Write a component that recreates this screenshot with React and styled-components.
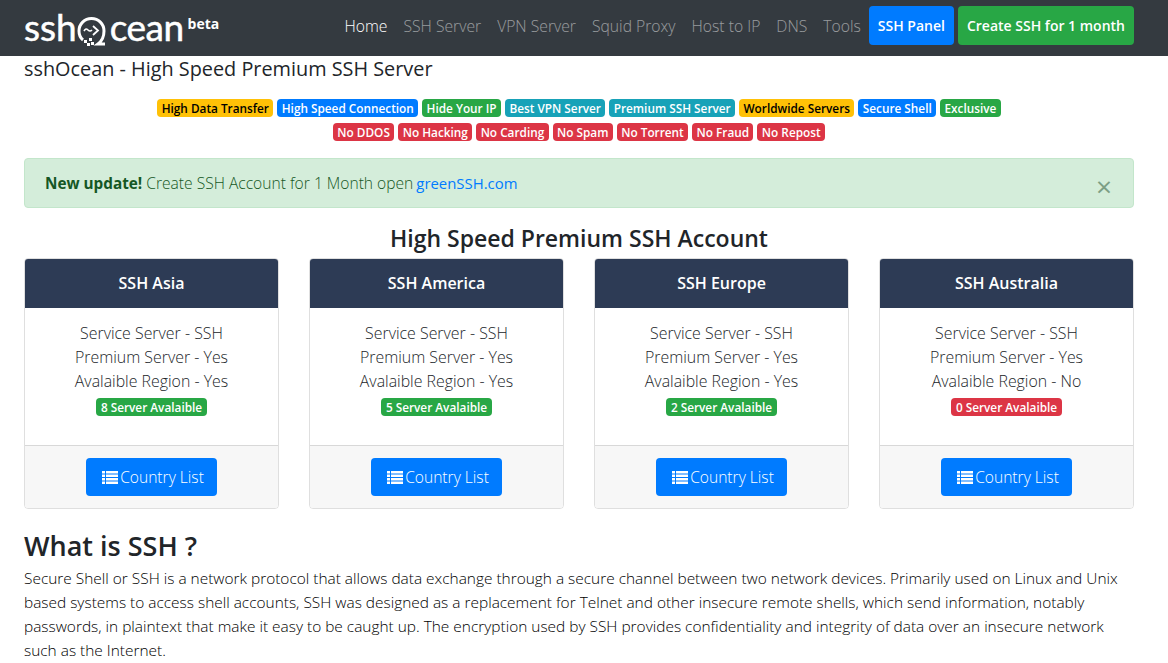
import React from 'react'
import styled, { createGlobalStyle } from 'styled-components'

const GlobalStyle = createGlobalStyle`
html, body {
  margin: 0;
  padding: 0;
  background: #fff;
  overflow: hidden;
}
body {
  font-family: "Open Sans", "Noto Sans", "Liberation Sans", sans-serif;
  font-size: 16px;
  font-weight: 300;
  line-height: 24px;
  color: #000;
}
* { box-sizing: border-box; }
`

const colors = {
  warning: '#ffc107',
  primary: '#007bff',
  success: '#28a745',
  info: '#17a2b8',
  danger: '#dc3545',
}

const Navbar = styled.nav`
  height: 56px;
  background: #343a40;
  display: flex;
  align-items: center;
  justify-content: space-between;
  padding: 0 34px 0 24px;
`
const Brand = styled.div`
  display: flex;
  align-items: flex-start;
  color: #fff;
  margin-top: -2px;
`
const LogoText = styled.span`
  font-family: "Lato", sans-serif;
  font-size: 37px;
  line-height: 44px;
  font-weight: 400;
  -webkit-text-stroke: 0.5px #fff;
  letter-spacing: ${props => props.$spacing || 0}px;
`
const LogoMark = styled.svg`
  width: 33px;
  height: 32px;
  margin-top: 11px;
  flex: none;
`
const Beta = styled.sup`
  font-size: 14px;
  line-height: 16px;
  font-weight: 700;
  margin: 11px 0 0 4px;
`
const NavLinks = styled.div`
  display: flex;
  align-items: center;
`
const NavLink = styled.a`
  padding: 0 8px;
  font-size: 15.7px;
  margin-top: -4px;
  color: ${props => (props.$active ? '#fff' : 'rgba(255,255,255,.5)')};
`
const NavButton = styled.a`
  height: 39px;
  margin-left: ${props => props.$gap || 0}px;
  margin-top: -5px;
  padding: 0 9px;
  display: flex;
  align-items: center;
  border-radius: 4px;
  font-size: 14px;
  font-weight: 600;
  color: #fff;
  background: ${props => colors[props.$color]};
`
const Content = styled.main`
  padding: 0 34px 0 24px;
`
const Heading = styled.h1`
  margin: -1px 0 0;
  font-size: 19.85px;
  line-height: 28px;
  font-weight: 400;
  color: #212529;
`
const BadgeRow = styled.div`
  display: flex;
  justify-content: center;
  gap: 4px;
  margin-top: ${props => props.$top}px;
`
const Badge = styled.span`
  display: inline-block;
  padding: 0 4.4px;
  height: 18px;
  margin-top: ${props => props.$top || 0}px;
  border-radius: 4px;
  font-size: 11.8px;
  line-height: 18px;
  font-weight: 600;
  white-space: nowrap;
  color: ${props => (props.$color === 'warning' ? '#000' : '#fff')};
  background: ${props => colors[props.$color]};
`
const Alert = styled.div`
  position: relative;
  height: 50px;
  margin-top: 17px;
  padding: 0 20px;
  display: flex;
  align-items: center;
  background: #d4edda;
  border: 1px solid #c3e6cb;
  border-radius: 4px;
  color: #155724;
  font-size: 15.6px;
`
const AlertLink = styled.a`
  color: #007bff;
  margin-left: 3px;
  font-size: 14.9px;
  font-weight: 400;
`
const Strong = styled.strong`
  margin-right: 4px;
  font-size: 15.3px;
  font-weight: 700;
`
const CloseButton = styled.span`
  position: absolute;
  right: 21px;
  top: 11px;
  font-size: 28px;
  line-height: 32px;
  font-weight: 400;
  color: #7c9f85;
`
const SectionTitle = styled.h2`
  margin: 16px 0 5px;
  text-align: center;
  font-size: 23px;
  line-height: 29px;
  font-weight: 600;
  color: #212529;
`
const CardGrid = styled.div`
  display: grid;
  grid-template-columns: repeat(4, 255px);
  justify-content: space-between;
`
const Card = styled.section`
  height: 251px;
  display: flex;
  flex-direction: column;
  border: 1px solid rgba(0,0,0,.125);
  border-radius: 4px;
  overflow: hidden;
`
const CardHeader = styled.header`
  height: 49px;
  flex: none;
  display: flex;
  align-items: center;
  justify-content: center;
  background: #2d3b55;
  color: #fff;
  font-size: 16px;
  font-weight: 600;
  padding-bottom: 2px;
`
const CardBody = styled.div`
  flex: 1;
  padding-top: 13px;
  text-align: center;
  font-size: 15.9px;
  color: #212529;
  display: flex;
  flex-direction: column;
  align-items: center;
`
const CardFooter = styled.footer`
  height: 63px;
  flex: none;
  display: flex;
  align-items: center;
  justify-content: center;
  background: #f7f7f7;
  border-top: 1px solid rgba(0,0,0,.125);
`
const ListButton = styled.a`
  height: 38px;
  width: 131px;
  padding-left: 3px;
  display: flex;
  align-items: center;
  justify-content: center;
  border-radius: 4px;
  background: #007bff;
  color: #fff;
  font-size: 15.6px;
`
const ListIcon = styled.svg`
  width: 16px;
  height: 14px;
  margin-right: 2px;
`
const About = styled.article`
  margin-top: 20px;
`
const AboutTitle = styled.h2`
  margin: 0 0 4px;
  font-size: 27px;
  line-height: 34px;
  font-weight: 600;
  color: #212529;
`
const AboutText = styled.p`
  margin: 0;
  font-size: 15.43px;
`

const topBadges = [
  ['High Data Transfer', 'warning'],
  ['High Speed Connection', 'primary'],
  ['Hide Your IP', 'success'],
  ['Best VPN Server', 'info'],
  ['Premium SSH Server', 'info'],
  ['Worldwide Servers', 'warning'],
  ['Secure Shell', 'primary'],
  ['Exclusive', 'success'],
]
const noBadges = ['No DDOS', 'No Hacking', 'No Carding', 'No Spam', 'No Torrent', 'No Fraud', 'No Repost']
const links = ['SSH Server', 'VPN Server', 'Squid Proxy', 'Host to IP', 'DNS', 'Tools']
const regions = [
  { name: 'SSH Asia', count: 8, available: 'Yes' },
  { name: 'SSH America', count: 5, available: 'Yes' },
  { name: 'SSH Europe', count: 2, available: 'Yes' },
  { name: 'SSH Australia', count: 0, available: 'No' },
]

const Mark = () => (
  <LogoMark viewBox="0 0 33 32" fill="none" stroke="#fff">
    <path d="M6 24C3.500 22 2 18.500 2 15C2 8 7.500 2.500 14.500 2.500S27 8 27 15C27 20 25 25 21 28H28" strokeWidth="3" />
    <path d="M7 15c1.500-2.500 2.500-2.500 4-1s2.500 1.500 4 0" strokeWidth="1.600" />
    <path d="M16 10l5 4.500-5 4.500" strokeWidth="1.800" />
    <path d="M7 24h3v3H7zM12 22h3v3h-3zM10 27h3v3h-3zM14 26h3v3h-3z" fill="#fff" stroke="none" />
  </LogoMark>
)

const App = () => (
  <>
    <GlobalStyle />
    <Navbar>
      <Brand>
        <LogoText>ssh</LogoText>
        <Mark />
        <LogoText $spacing={-0.5}>cean</LogoText>
        <Beta>beta</Beta>
      </Brand>
      <NavLinks>
        <NavLink $active>Home</NavLink>
        {links.map(link => <NavLink key={link}>{link}</NavLink>)}
        <NavButton $color="primary">SSH Panel</NavButton>
        <NavButton $color="success" $gap={4}>Create SSH for 1 month</NavButton>
      </NavLinks>
    </Navbar>
    <Content>
      <Heading>sshOcean - High Speed Premium SSH Server</Heading>
      <BadgeRow $top={16}>
        {topBadges.map(([text, color]) => <Badge key={text} $color={color}>{text}</Badge>)}
      </BadgeRow>
      <BadgeRow $top={6}>
        {noBadges.map(text => <Badge key={text} $color="danger">{text}</Badge>)}
      </BadgeRow>
      <Alert>
        <Strong>New update!</Strong> Create SSH Account for 1 Month open <AlertLink>greenSSH.com</AlertLink>
        <CloseButton>×</CloseButton>
      </Alert>
      <SectionTitle>High Speed Premium SSH Account</SectionTitle>
      <CardGrid>
        {regions.map(region => (
          <Card key={region.name}>
            <CardHeader>{region.name}</CardHeader>
            <CardBody>
              <div>Service Server - SSH</div>
              <div>Premium Server - Yes</div>
              <div>Avalaible Region - {region.available}</div>
              <Badge $top={5} $color={region.count ? 'success' : 'danger'}>{region.count} Server Avalaible</Badge>
            </CardBody>
            <CardFooter>
              <ListButton>
                <ListIcon viewBox="0 0 16 14" fill="#fff">
                  <path d="M0 1h3v2.500H0zM4 1h12v2.500H4zM0 4.500h3V7H0zM4 4.500h12V7H4zM0 8h3v2.500H0zM4 8h12v2.500H4zM0 11.500h3V14H0zM4 11.500h12V14H4z" />
                </ListIcon>
                Country List
              </ListButton>
            </CardFooter>
          </Card>
        ))}
      </CardGrid>
      <About>
        <AboutTitle>What is SSH ?</AboutTitle>
        <AboutText>
          Secure Shell or SSH is a network protocol that allows data exchange through a secure channel between two network devices. Primarily used on Linux and Unix based systems to access shell accounts, SSH was designed as a replacement for Telnet and other insecure remote shells, which send information, notably passwords, in plaintext that make it easy to be caught up. The encryption used by SSH provides confidentiality and integrity of data over an insecure network such as the Internet.
        </AboutText>
      </About>
    </Content>
  </>
)

export default App
